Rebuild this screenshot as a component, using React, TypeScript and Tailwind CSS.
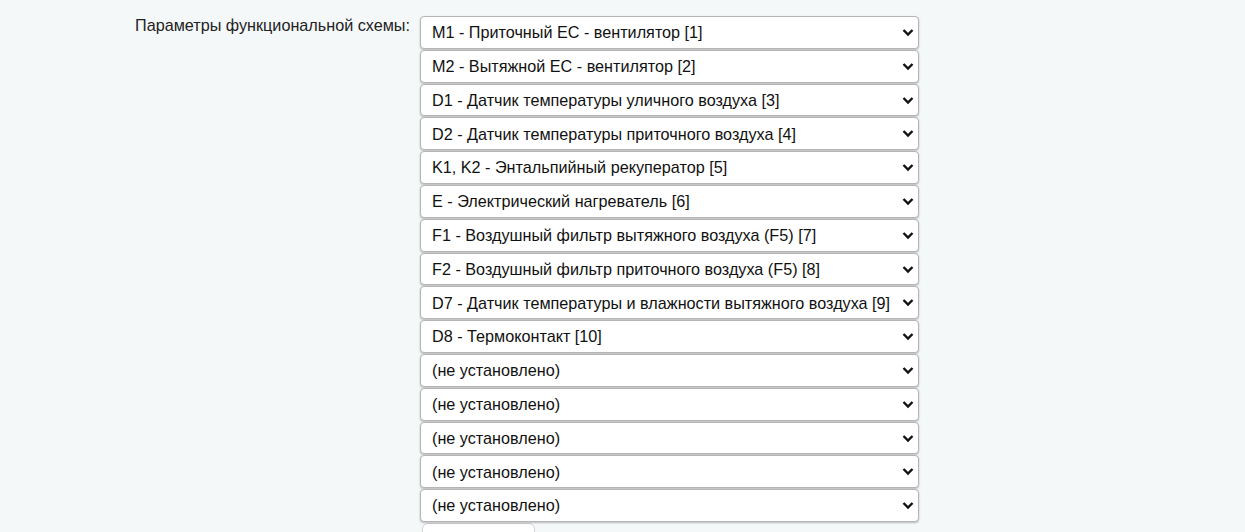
import React from 'react';

const options = [
  'M1 - Приточный ЕС - вентилятор [1]',
  'M2 - Вытяжной ЕС - вентилятор [2]',
  'D1 - Датчик температуры уличного воздуха [3]',
  'D2 - Датчик температуры приточного воздуха [4]',
  'K1, K2 - Энтальпийный рекуператор [5]',
  'E - Электрический нагреватель [6]',
  'F1 - Воздушный фильтр вытяжного воздуха (F5) [7]',
  'F2 - Воздушный фильтр приточного воздуха (F5) [8]',
  'D7 - Датчик температуры и влажности вытяжного воздуха [9]',
  'D8 - Термоконтакт [10]',
  '(не установлено)',
  '(не установлено)',
  '(не установлено)',
  '(не установлено)',
  '(не установлено)',
];

function Select({ value }: { value: string }) {
  return (
    <div className="relative w-[499px] h-[32.8px]">
      <select
        defaultValue={value}
        className="appearance-none w-full h-full bg-white border border-[#b5b5b5] rounded-[4px] shadow-[0_1px_2px_rgba(0,0,0,0.25)] pl-[11px] pr-[20px] text-[16.2px] text-[#111] outline-none"
        style={{ fontFamily: '"Liberation Sans", Arial, sans-serif' }}
      >
        <option>{value}</option>
      </select>
      <svg
        className="pointer-events-none absolute right-[5px] top-[12px]"
        width="12"
        height="9"
        viewBox="0 0 12 9"
      >
        <path d="M1.5 2 L6 6.5 L10.5 2" fill="none" stroke="#111" strokeWidth="2.4" />
      </svg>
    </div>
  );
}

export default function App() {
  return (
    <div
      className="min-h-screen w-full bg-[#f5f8f9] overflow-hidden"
      style={{ fontFamily: '"Liberation Sans", Arial, sans-serif' }}
    >
      <div className="flex pt-[16px]">
        <div className="w-[420px] pr-[10px] text-right text-[16.2px] leading-[18px] text-[#222]">
          Параметры функциональной схемы:
        </div>
        <div className="flex flex-col gap-[1px]">
          {options.map((o, i) => (
            <Select key={i} value={o} />
          ))}
          <div className="ml-[2px] w-[113px] h-[30px] bg-white border border-[#d4d4d4] rounded-[6px]" />
        </div>
      </div>
    </div>
  );
}
